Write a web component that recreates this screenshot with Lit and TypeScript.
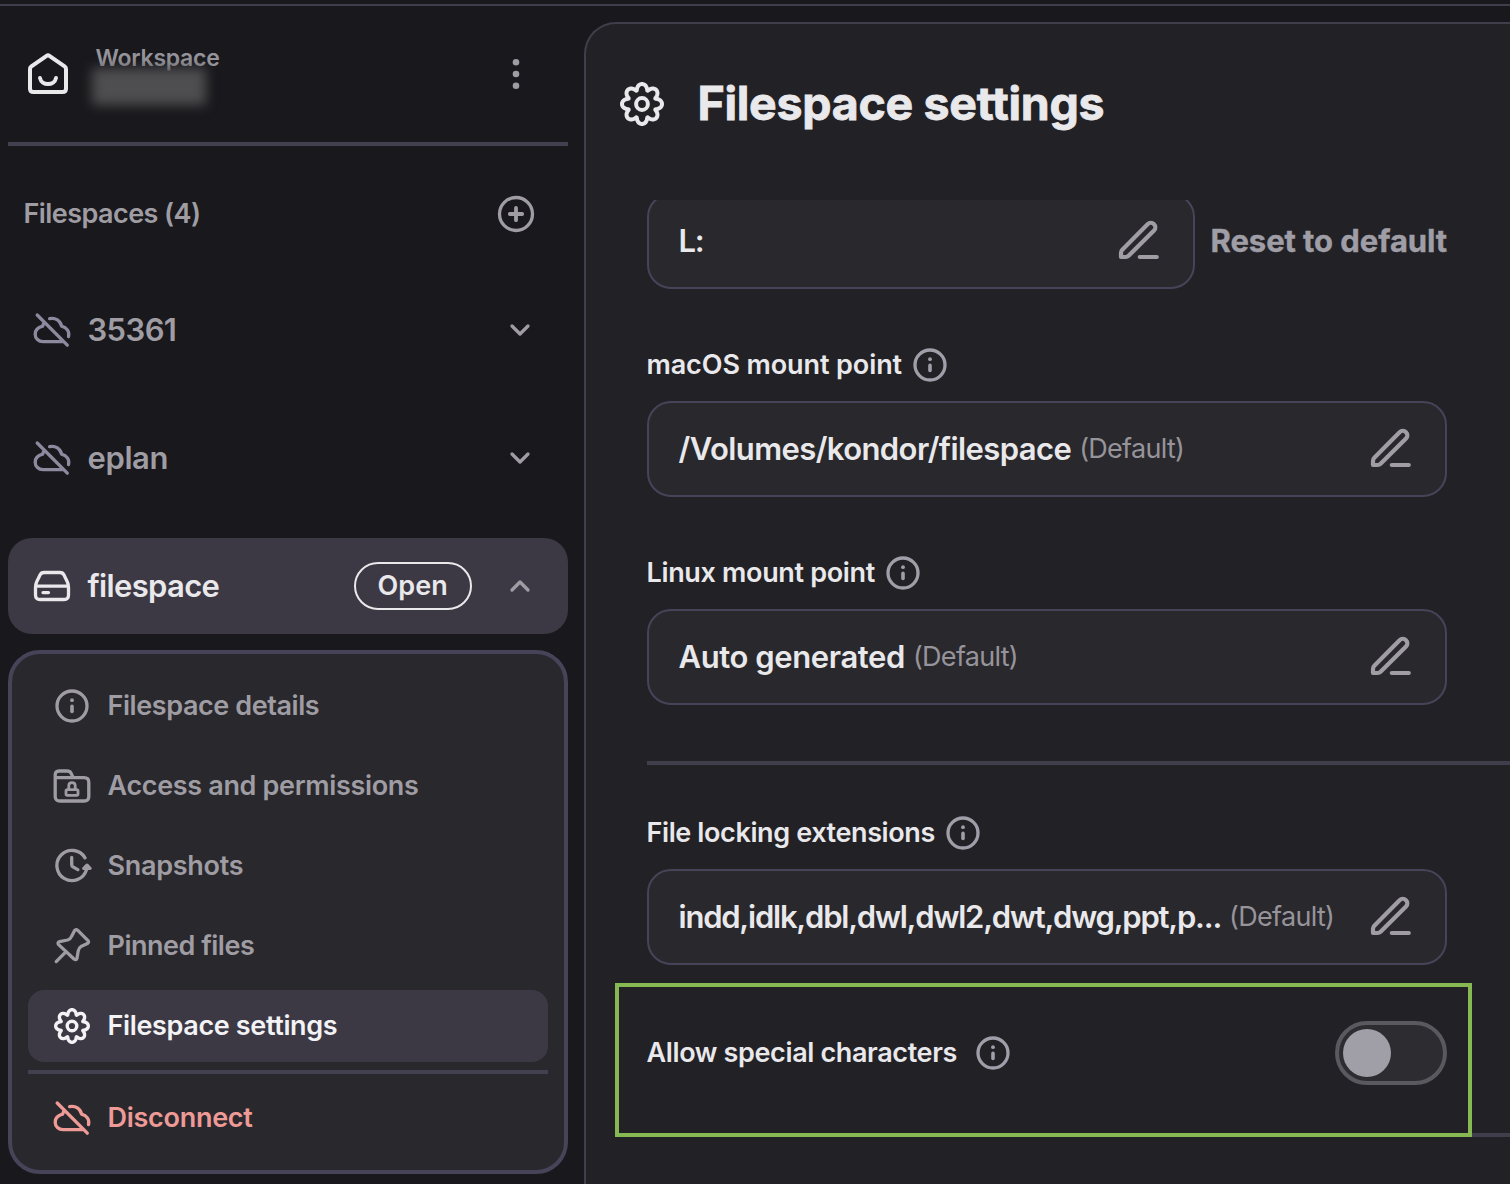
import { LitElement, html, css, svg } from "lit";
import { customElement } from "lit/decorators.js";

// Tracking in px for each string, so that labels keep their intended widths.
const tracking: Record<string, number> = {
  "Workspace": -0.25,
  "Filespaces (4)": -0.56,
  "35361": -0.6,
  "eplan": -0.4,
  "filespace": -0.66,
  "Open": 0.1,
  "Filespace details": -0.42,
  "Access and permissions": -0.34,
  "Snapshots": -0.28,
  "Pinned files": -0.5,
  "Filespace settings": -0.36,
  "Disconnect": -0.28,
  "L:": -1.2,
  "Reset to default": -0.06,
  "macOS mount point": -0.1,
  "/Volumes/kondor/filespace": -0.59,
  "(Default)": -0.7,
  "Linux mount point": -0.33,
  "Auto generated": -0.4,
  "File locking extensions": -0.385,
  "indd,idlk,dbl,dwl,dwl2,dwt,dwg,ppt,p...": -1.225,
  "Allow special characters": -0.37,
};

function label(text: string, cls = "") {
  return html`<span class=${cls} style="letter-spacing:${tracking[text] ?? 0}px">${text}</span>`;
}

function gearPath(c: number, mean: number, amp: number, lean: number): string {
  const pts: string[] = [];
  const n = 240;
  for (let i = 0; i < n; i++) {
    const t = (i / n) * Math.PI * 2;
    const r = mean + amp * Math.cos(8 * t);
    const a = t + lean * Math.sin(8 * t);
    pts.push(`${(c + r * Math.cos(a)).toFixed(2)} ${(c + r * Math.sin(a)).toFixed(2)}`);
  }
  return `M${pts.join("L")}Z`;
}

const icons: Record<string, unknown> = {
  home: svg`<path stroke-width="4" d="M6 19Q6 17.4 7.4 16.4L22.6 5.8Q24 4.8 25.4 5.8L40.6 16.4Q42 17.4 42 19V38.5Q42 42 38.5 42H9.5Q6 42 6 38.5Z"/><path stroke-width="4" d="M16 28C17.5 36 30.5 36 32 28"/>`,
  cloud: svg`<path d="M5.2 5L35.3 35.2M12 12C11.7 13.6 11 14.8 10.6 16.2C6 17.4 3.2 20.5 3.2 24.2C3.2 28.5 6.6 31.7 11 31.7H31.5M17.6 8.6C23.6 7.4 28.4 10.7 29.6 16.2C34.5 17.7 37.8 21.5 36.5 26.6"/>`,
  drive: svg`<path d="M3.5 21.5Q3.5 18.5 4.6 16L8 9Q9.2 6.5 12 6.5H28Q30.8 6.5 32 9L35.4 16Q36.5 18.5 36.5 21.5V29Q36.5 33.5 32 33.5H8Q3.5 33.5 3.5 29ZM4.5 20.2H35.5M11 26.6H16.5"/>`,
  info: svg`<circle cx="20" cy="20" r="15"/><path stroke-width="3.6" d="M20 20.4V25.4"/><circle cx="20" cy="14.2" r="1.9" fill="currentColor" stroke="none"/>`,
  folder: svg`<path d="M3.2 11.8V9Q3.2 5 7 5H15Q18 5 19.2 7.4L21.2 11.6H32Q36.8 11.6 36.8 16.3V30.5Q36.8 35 32 35H8Q3.2 35 3.2 30.5V11.6H21"/><rect stroke-width="2.8" x="14" y="23.6" width="12" height="5.8" rx="1.4"/><path stroke-width="2.8" d="M16.8 23V19.5C16.8 15.6 23.2 15.6 23.2 19.5V23"/>`,
  snap: svg`<path d="M33 11.8A15.1 15.1 0 1 0 34.4 24M31.8 22.4L35 19.2L38 22.4ZM19.7 11.4V18.4Q19.7 20 21 20.9L25.8 23.6"/>`,
  pin: svg`<path d="M22.6 4.6Q24 2.8 25.8 4.4L36 14.6Q37.4 16.4 35.4 17.6L29.5 20.2Q26.8 21.8 26.2 25L25 32.2Q24.2 34.6 22 33L6.6 18.6Q5 16.6 7.6 15.6L15.6 14Q18.6 13 19.8 10ZM13.6 26.2L4.2 35.6"/>`,
  gear: svg`<path stroke-width="3.4" d="${gearPath(20, 14, 2.3, 0.075)}"/><circle stroke-width="3.4" cx="20" cy="20" r="4.8"/>`,
  bigGear: svg`<path stroke-width="4" d="${gearPath(24, 17.2, 2.8, 0.075)}"/><circle stroke-width="4" cx="24" cy="24" r="5.9"/>`,
  plus: svg`<circle cx="20" cy="20" r="16.5"/><path stroke-width="3.8" d="M20 13.8V26.2M13.8 20H26.2"/>`,
  down: svg`<path d="M12 16L20 24L28 16"/>`,
  up: svg`<path d="M12 24L20 16L28 24"/>`,
  dots: svg`<g fill="currentColor" stroke="none"><circle cx="20" cy="8.3" r="3.3"/><circle cx="20" cy="20" r="3.3"/><circle cx="20" cy="31.7" r="3.3"/></g>`,
  pencil: svg`<path stroke-width="4.2" d="M6 40V35.8Q6 34 7.3 32.7L32.6 7.2A4.5 4.5 0 0 1 39 13.6L13.6 38.8Q12.4 40 10.6 40ZM24.8 40H41.8"/>`,
};

function icon(name: string, size = 40) {
  return html`<svg class="icon" width=${size} height=${size} viewBox="0 0 ${size} ${size}">${icons[name]}</svg>`;
}

@customElement("app-root")
export class AppRoot extends LitElement {
  static styles = css`
    :host { display: block; }
    * { box-sizing: border-box; }
    .page { width: 1510px; height: 1184px; overflow: hidden; background: #19181c; font-family: Inter, "Liberation Sans", sans-serif; color: #e9e8eb; padding-top: 4px; font-weight: 600; }
    .shell { border-top: 2px solid #403e4b; height: 1180px; display: flex; }
    .icon { display: block; flex: none; fill: none; stroke: currentColor; stroke-width: 3.3; stroke-linecap: round; stroke-linejoin: round; }
    span { white-space: nowrap; padding-bottom: 2px; margin-left: -0.5px; }
    .side { width: 576px; padding-left: 8px; padding-right: 8px; flex: none; color: #9f9da3; }
    .head { height: 140px; border-bottom: 4px solid #434150; display: flex; padding: 44px 32px 0 16px; }
    .head .home { color: #e9e8eb; }
    .who { margin-left: 24px; margin-top: -8px; flex: 1; }
    .ws { display: block; font-size: 23px; line-height: 32px; height: 32px; color: #96949b; }
    .redacted { margin-top: -6px; margin-left: -4px; width: 114px; height: 37px; background: #4e4d50; filter: blur(6px); }
    .more { margin-top: 4px; }
    .section { height: 136px; display: flex; align-items: center; justify-content: space-between; padding: 0 32px 0 16px; font-size: 27px; }
    .row { height: 96px; margin-bottom: 32px; display: flex; align-items: center; padding: 0 28px 0 24px; border-radius: 24px; font-size: 31px; gap: 16px; }
    .row .name { flex: 1; }
    .row .cloud { color: #8d8aa0; }
    .active { background: #3c3945; margin-bottom: 16px; color: #e9e8eb; }
    .active .chev { color: #9f9da3; }
    .open { height: 48px; width: 118px; border: 2px solid #e9e8eb; border-radius: 24px; font-size: 27px; display: grid; place-items: center; margin-right: 12px; }
    .menu { border: 4px solid #474459; border-radius: 32px; background: #29282d; padding: 16px; height: 524px; }
    .item { height: 72px; margin-bottom: 8px; border-radius: 16px; display: flex; align-items: center; gap: 16px; padding-left: 24px; font-size: 27px; }
    .item.on { background: #3c3945; color: #f3f2f5; }
    .item.off { color: #ee9a97; }
    .rule { height: 4px; background: #434150; margin-bottom: 8px; }
    .main { flex: 1; min-width: 0; margin-top: 16px; margin-left: 8px; border: 2px solid #403e4b; border-right: 0; border-bottom: 0; border-radius: 32px 0 0 0; background: #222125; }
    .title { height: 176px; padding: 56px 0 0 32px; display: flex; gap: 32px; }
    .title h1 { margin: -1px 0 0 -0.5px; font-size: 46.5px; line-height: 48px; font-weight: 700; white-space: nowrap; letter-spacing: -0.3px; -webkit-text-stroke: 0.8px #e9e8eb; }
    .scroll { height: 984px; overflow: hidden; padding-left: 61px; }
    .first { margin-top: -7px; display: flex; align-items: center; gap: 16px; }
    .field { width: 800px; height: 96px; border: 2px solid #474459; border-radius: 24px; background: #29282d; display: flex; align-items: center; padding: 0 30px; font-size: 31px; }
    .first .field { width: 548px; }
    .field .icon { margin-left: auto; color: #a09ea4; }
    .def { font-size: 27px; font-weight: 400; color: #96949a; margin-left: 8px; }
    .reset { font-size: 31px; font-weight: 700; color: #9f9da6; -webkit-text-stroke: 0.4px #9f9da6; }
    .label { margin-top: 56px; height: 40px; margin-bottom: 16px; display: flex; align-items: center; gap: 8px; font-size: 27px; }
    .label .icon, .allow .icon { color: #a09ea8; }
    .divider { height: 4px; background: #403e4b; margin-top: 56px; margin-bottom: -8px; }
    .end { display: flex; align-items: flex-end; margin: 18px 0 0 -32px; }
    .tail { flex: 1; height: 4px; background: #403e4b; }
    .allow { width: 857px; height: 154px; border: 4px solid #86b951; display: flex; align-items: center; gap: 16px; padding: 0 21px 14px 28px; font-size: 27px; }
    .toggle { margin-left: auto; width: 112px; height: 64px; border: 4px solid #5a595f; border-radius: 32px; background: #2d2c30; padding: 4px; }
    .knob { width: 48px; height: 48px; border-radius: 24px; background: #a09ea7; }
  `;

  private item(ic: string, text: string, cls = "") {
    return html`<div class="item ${cls}">${icon(ic)}${label(text)}</div>`;
  }

  private field(value: string, def = true) {
    return html`<div class="field">${label(value)}${def ? label("(Default)", "def") : ""}${icon("pencil", 48)}</div>`;
  }

  render() {
    return html`<div class="page"><div class="shell">
      <div class="side">
        <div class="head"><div class="home">${icon("home", 48)}</div>
          <div class="who">${label("Workspace", "ws")}<div class="redacted"></div></div>
          <div class="more">${icon("dots")}</div></div>
        <div class="section">${label("Filespaces (4)")}${icon("plus")}</div>
        <div class="row"><div class="cloud">${icon("cloud")}</div>${label("35361", "name")}${icon("down")}</div>
        <div class="row"><div class="cloud">${icon("cloud")}</div>${label("eplan", "name")}${icon("down")}</div>
        <div class="row active">${icon("drive")}${label("filespace", "name")}<div class="open">${label("Open")}</div><div class="chev">${icon("up")}</div></div>
        <div class="menu">
          ${this.item("info", "Filespace details")}${this.item("folder", "Access and permissions")}
          ${this.item("snap", "Snapshots")}${this.item("pin", "Pinned files")}${this.item("gear", "Filespace settings", "on")}
          <div class="rule"></div>${this.item("cloud", "Disconnect", "off")}
        </div>
      </div>
      <div class="main">
        <div class="title">${icon("bigGear", 48)}<h1>Filespace settings</h1></div>
        <div class="scroll">
          <div class="first">${this.field("L:", false)}${label("Reset to default", "reset")}</div>
          <div class="label">${label("macOS mount point")}${icon("info")}</div>${this.field("/Volumes/kondor/filespace")}
          <div class="label">${label("Linux mount point")}${icon("info")}</div>${this.field("Auto generated")}
          <div class="divider"></div>
          <div class="label">${label("File locking extensions")}${icon("info")}</div>${this.field("indd,idlk,dbl,dwl,dwl2,dwt,dwg,ppt,p...")}
          <div class="end"><div class="allow">${label("Allow special characters")}${icon("info")}<div class="toggle"><div class="knob"></div></div></div><div class="tail"></div></div>
        </div>
      </div>
    </div></div>`;
  }
}
